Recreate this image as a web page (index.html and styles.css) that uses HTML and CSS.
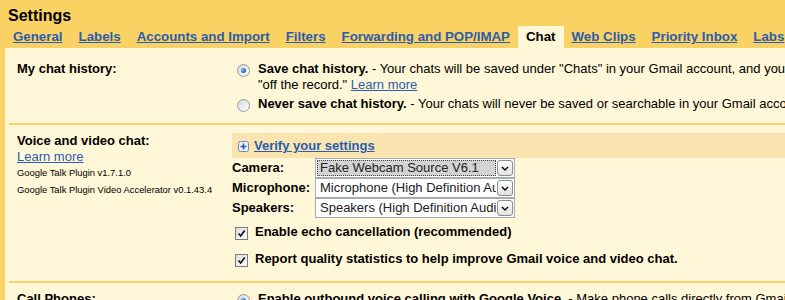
FILE: index.html
```html
<!DOCTYPE html>
<html lang="en">
<head>
    <meta charset="UTF-8">
    <title>Settings</title>
    <link rel="stylesheet" href="styles.css">
</head>
<body>

    <div class="header">
        <div class="title">Settings</div>
        <div class="tabs">
            <a class="tab" href="#">General</a>
            <a class="tab" href="#">Labels</a>
            <a class="tab" href="#">Accounts and Import</a>
            <a class="tab" href="#">Filters</a>
            <a class="tab" href="#">Forwarding and POP/IMAP</a>
            <span class="tab active">Chat</span>
            <a class="tab" href="#">Web Clips</a>
            <a class="tab" href="#">Priority Inbox</a>
            <a class="tab" href="#">Labs</a>
        </div>
    </div>

    <div class="panel">
        <div class="section first">
            <div class="label">My chat history:</div>
            <div class="value">
                <div class="option">
                    <span class="radio checked"></span>
                    <div><b>Save chat history.</b> - Your chats will be saved under "Chats" in your Gmail account, and you can search them later. Chats you have when you go<br>"off the record." <a href="#">Learn more</a></div>
                </div>
                <div class="option second">
                    <span class="radio"></span>
                    <div><b>Never save chat history.</b> - Your chats will never be saved or searchable in your Gmail account.</div>
                </div>
            </div>
        </div>

        <div class="section">
            <div class="label">
                Voice and video chat:
                <div class="label-link"><a href="#">Learn more</a></div>
                <div class="plugin">Google Talk Plugin v1.7.1.0</div>
                <div class="plugin second">Google Talk Plugin Video Accelerator v0.1.43.4</div>
            </div>
            <div class="value">
                <div class="verify">
                    <svg class="plus" width="11" height="11" viewBox="0 0 11 11">
                        <rect x="0.5" y="0.5" width="10" height="10" rx="2" fill="#eef2fb" stroke="#6d86bb"/>
                        <path d="M2.5 5.5h6M5.5 2.5v6" stroke="#2a5db0" stroke-width="1.6"/>
                    </svg>
                    <a href="#">Verify your settings</a>
                </div>
                <div class="devices">
                    <span class="device-label">Camera:</span>
                    <div class="select">
                        <span class="select-text focus">Fake Webcam Source V6.1</span>
                        <span class="select-btn"><svg width="8" height="5" viewBox="0 0 8 5"><path d="M1 1l3 3 3-3" fill="none" stroke="#000" stroke-width="1.4"/></svg></span>
                    </div>
                    <span class="device-label">Microphone:</span>
                    <div class="select">
                        <span class="select-text">Microphone (High Definition Audio Device)</span>
                        <span class="select-btn"><svg width="8" height="5" viewBox="0 0 8 5"><path d="M1 1l3 3 3-3" fill="none" stroke="#000" stroke-width="1.4"/></svg></span>
                    </div>
                    <span class="device-label">Speakers:</span>
                    <div class="select">
                        <span class="select-text">Speakers (High Definition Audio Device)</span>
                        <span class="select-btn"><svg width="8" height="5" viewBox="0 0 8 5"><path d="M1 1l3 3 3-3" fill="none" stroke="#000" stroke-width="1.4"/></svg></span>
                    </div>
                </div>
                <div class="checks">
                    <div class="check">
                        <span class="checkbox"><svg width="11" height="11" viewBox="0 0 11 11"><path d="M2.5 5.5l2.2 2.5 4-5.5" fill="none" stroke="#111" stroke-width="1.7"/></svg></span>
                        <b>Enable echo cancellation (recommended)</b>
                    </div>
                    <div class="check second">
                        <span class="checkbox"><svg width="11" height="11" viewBox="0 0 11 11"><path d="M2.5 5.5l2.2 2.5 4-5.5" fill="none" stroke="#111" stroke-width="1.7"/></svg></span>
                        <b>Report quality statistics to help improve Gmail voice and video chat.</b>
                    </div>
                </div>
            </div>
        </div>

        <div class="section">
            <div class="label">Call Phones:</div>
            <div class="value">
                <div class="option">
                    <span class="radio checked"></span>
                    <div><b>Enable outbound voice calling with Google Voice.</b> - Make phone calls directly from Gmail to any phone number.</div>
                </div>
            </div>
        </div>
    </div>

</body>
</html>
```

FILE: styles.css
```css
* {
    box-sizing: border-box;
}
body {
    margin: 0;
    height: 300px;
    overflow: hidden;
    background-color: #fad163;
    font-family: "Liberation Sans", Arial, sans-serif;
    font-size: 13px;
    color: #000;
}
a {
    color: #2a5db0;
    text-decoration: underline;
}
.title {
    font-size: 16px;
    font-weight: bold;
    line-height: 19px;
    padding: 6px 8px 0;
}
.tabs {
    display: flex;
    margin: 1px 0 0 5px;
    white-space: nowrap;
}
.tab {
    padding: 0 8px;
    line-height: 22px;
    font-size: 13.3px;
    font-weight: bold;
}
.tab.active {
    background-color: #fff7d7;
    color: #000;
}
.panel {
    margin-left: 5px;
    padding-top: 5px;
    background-color: #fff7d7;
    overflow: hidden;
    height: 260px;
}
.section {
    display: flex;
    margin-left: 4px;
    padding: 8px 0 11px;
    border-top: 2px solid #fad163;
    white-space: nowrap;
    line-height: 16px;
}
.section.first {
    border-top: none;
}
.label {
    width: 223px;
    flex-shrink: 0;
    padding-left: 8px;
    font-weight: bold;
}
.label-link {
    font-weight: normal;
}
.plugin {
    font-weight: normal;
    font-size: 9.4px;
    line-height: 12px;
    margin-top: 2px;
}
.plugin.second {
    margin-top: 5px;
}
.value {
    flex: 1;
}
.option {
    display: flex;
}
.option.second {
    margin-top: 3px;
}
.radio {
    position: relative;
    flex-shrink: 0;
    width: 13px;
    height: 13px;
    margin: 3px 8px 0 5px;
    border: 1px solid #929ca6;
    border-radius: 50%;
    background: linear-gradient(135deg, #d4d6d8, #ffffff);
}
.radio.checked::after {
    content: "";
    position: absolute;
    left: 3px;
    top: 3px;
    width: 5px;
    height: 5px;
    border-radius: 50%;
    background: radial-gradient(circle at 35% 35%, #7cc0f4, #1a62b6 70%);
}
.verify {
    display: flex;
    align-items: center;
    height: 25px;
    padding: 1px 6px 0;
    background-color: #fae5b0;
    font-weight: bold;
}
.plus {
    margin-right: 5px;
}
.devices {
    display: grid;
    grid-template-columns: 83px 200px;
    grid-auto-rows: 20px;
}
.device-label {
    font-weight: bold;
    line-height: 20px;
}
.select {
    display: flex;
    align-items: center;
    height: 20px;
    padding: 1px;
    border: 1px solid #a5acb2;
    background-color: #fff;
}
.select-text {
    flex: 1;
    height: 16px;
    overflow: hidden;
    padding-left: 3px;
    line-height: 16px;
    color: #222;
}
.select-text.focus {
    background-color: #d3d3d3;
    outline: 1px dotted #444;
    outline-offset: -1px;
}
.select-btn {
    display: flex;
    align-items: center;
    justify-content: center;
    width: 16px;
    height: 16px;
    margin-left: 1px;
    border: 1px solid #8d8d8d;
    border-radius: 3px;
    background: linear-gradient(#ffffff, #e2e2e2);
}
.checks {
    margin: 6px 0 3px;
}
.check {
    display: flex;
}
.check.second {
    margin-top: 11px;
}
.checkbox {
    display: flex;
    align-items: center;
    justify-content: center;
    flex-shrink: 0;
    width: 13px;
    height: 13px;
    margin: 3px 7px 0 3px;
    border: 1px solid #7b7b7b;
    background: linear-gradient(135deg, #dcdcdc, #ffffff);
}
```
